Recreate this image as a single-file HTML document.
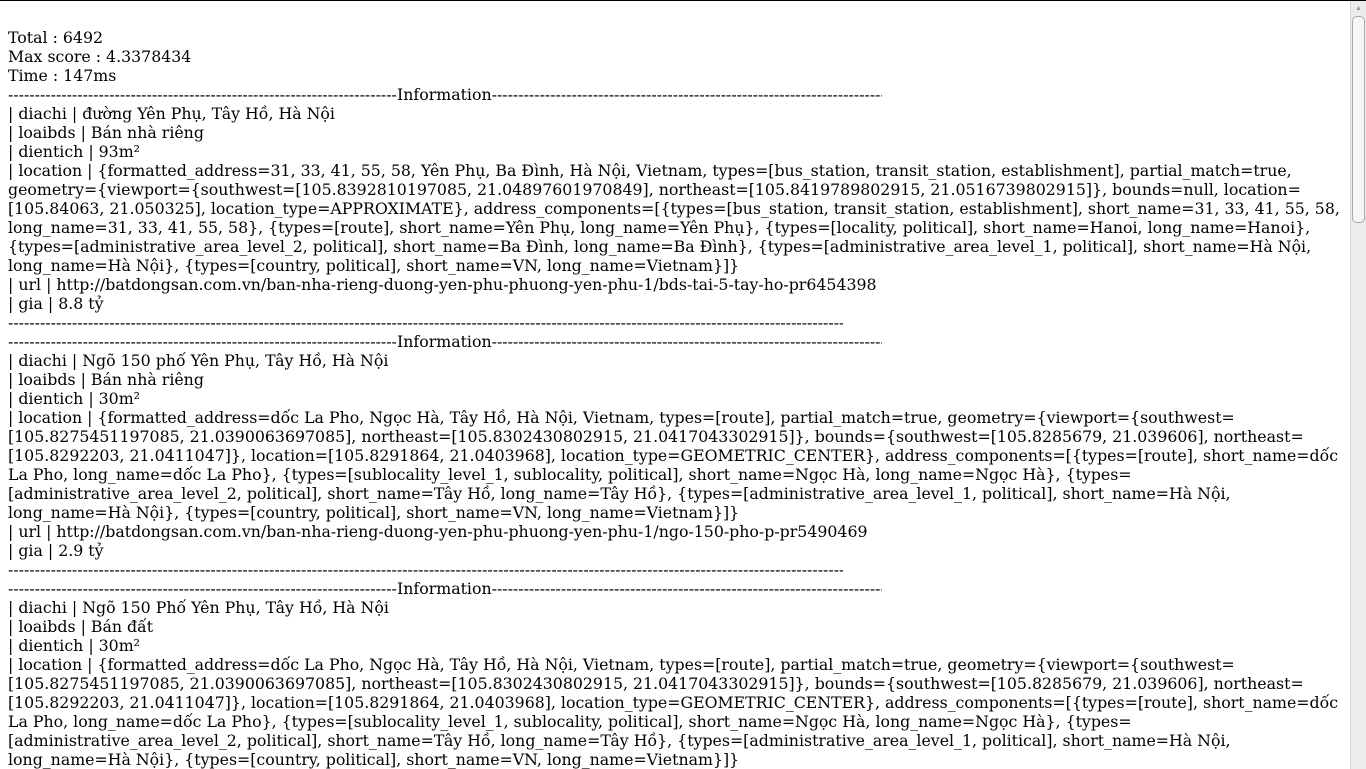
<!DOCTYPE html>
<html><head><meta charset="utf-8"><style>
html,body{margin:0;padding:0;background:#fff;}
body{width:1366px;height:768px;overflow:hidden;position:relative;border-top:1px solid #000;box-sizing:border-box;}
#c{position:absolute;left:8px;top:27px;font-family:"DejaVu Serif","Liberation Serif",serif;font-size:15.78px;line-height:19px;color:#000;white-space:nowrap;}
.d{display:inline-block;overflow:hidden;vertical-align:top;height:19px;}
#sb{position:absolute;left:1350px;top:0;width:16px;height:768px;background:#ececec;border-left:1px solid #d8d8d8;z-index:2;}
#th{position:absolute;left:1352px;top:15px;width:11px;height:205px;background:#f6f6f6;border:1px solid #a8a8a8;border-radius:5px;z-index:3;}
#up{position:absolute;left:1354px;top:3px;width:9px;height:9px;color:#999;font-size:7px;text-align:center;z-index:3;}
</style></head><body>
<div id="c">
Total : 6492<br>
Max score : 4.3378434<br>
Time : 147ms<br>
<span class="d" style="width:389px">----------------------------------------------------------------------------------------------------</span>Information<span class="d" style="width:390px">----------------------------------------------------------------------------------------------------</span><br>
| diachi | đường Yên Phụ, Tây Hồ, Hà Nội<br>
| loaibds | Bán nhà riêng<br>
| dientich | 93m²<br>
| location | {formatted_address=31, 33, 41, 55, 58, Yên Phụ, Ba Đình, Hà Nội, Vietnam, types=[bus_station, transit_station, establishment], partial_match=true,<br>
geometry={viewport={southwest=[105.8392810197085, 21.04897601970849], northeast=[105.8419789802915, 21.0516739802915]}, bounds=null, location=<br>
[105.84063, 21.050325], location_type=APPROXIMATE}, address_components=[{types=[bus_station, transit_station, establishment], short_name=31, 33, 41, 55, 58,<br>
long_name=31, 33, 41, 55, 58}, {types=[route], short_name=Yên Phụ, long_name=Yên Phụ}, {types=[locality, political], short_name=Hanoi, long_name=Hanoi},<br>
{types=[administrative_area_level_2, political], short_name=Ba Đình, long_name=Ba Đình}, {types=[administrative_area_level_1, political], short_name=Hà Nội,<br>
long_name=Hà Nội}, {types=[country, political], short_name=VN, long_name=Vietnam}]}<br>
| url | http://batdongsan.com.vn/ban-nha-rieng-duong-yen-phu-phuong-yen-phu-1/bds-tai-5-tay-ho-pr6454398<br>
| gia | 8.8 tỷ<br>
<span class="d" style="width:835px">------------------------------------------------------------------------------------------------------------------------------------------------------------------------------------------</span><br>
<span class="d" style="width:389px">----------------------------------------------------------------------------------------------------</span>Information<span class="d" style="width:390px">----------------------------------------------------------------------------------------------------</span><br>
| diachi | Ngõ 150 phố Yên Phụ, Tây Hồ, Hà Nội<br>
| loaibds | Bán nhà riêng<br>
| dientich | 30m²<br>
| location | {formatted_address=dốc La Pho, Ngọc Hà, Tây Hồ, Hà Nội, Vietnam, types=[route], partial_match=true, geometry={viewport={southwest=<br>
[105.8275451197085, 21.0390063697085], northeast=[105.8302430802915, 21.0417043302915]}, bounds={southwest=[105.8285679, 21.039606], northeast=<br>
[105.8292203, 21.0411047]}, location=[105.8291864, 21.0403968], location_type=GEOMETRIC_CENTER}, address_components=[{types=[route], short_name=dốc<br>
La Pho, long_name=dốc La Pho}, {types=[sublocality_level_1, sublocality, political], short_name=Ngọc Hà, long_name=Ngọc Hà}, {types=<br>
[administrative_area_level_2, political], short_name=Tây Hồ, long_name=Tây Hồ}, {types=[administrative_area_level_1, political], short_name=Hà Nội,<br>
long_name=Hà Nội}, {types=[country, political], short_name=VN, long_name=Vietnam}]}<br>
| url | http://batdongsan.com.vn/ban-nha-rieng-duong-yen-phu-phuong-yen-phu-1/ngo-150-pho-p-pr5490469<br>
| gia | 2.9 tỷ<br>
<span class="d" style="width:835px">------------------------------------------------------------------------------------------------------------------------------------------------------------------------------------------</span><br>
<span class="d" style="width:389px">----------------------------------------------------------------------------------------------------</span>Information<span class="d" style="width:390px">----------------------------------------------------------------------------------------------------</span><br>
| diachi | Ngõ 150 Phố Yên Phụ, Tây Hồ, Hà Nội<br>
| loaibds | Bán đất<br>
| dientich | 30m²<br>
| location | {formatted_address=dốc La Pho, Ngọc Hà, Tây Hồ, Hà Nội, Vietnam, types=[route], partial_match=true, geometry={viewport={southwest=<br>
[105.8275451197085, 21.0390063697085], northeast=[105.8302430802915, 21.0417043302915]}, bounds={southwest=[105.8285679, 21.039606], northeast=<br>
[105.8292203, 21.0411047]}, location=[105.8291864, 21.0403968], location_type=GEOMETRIC_CENTER}, address_components=[{types=[route], short_name=dốc<br>
La Pho, long_name=dốc La Pho}, {types=[sublocality_level_1, sublocality, political], short_name=Ngọc Hà, long_name=Ngọc Hà}, {types=<br>
[administrative_area_level_2, political], short_name=Tây Hồ, long_name=Tây Hồ}, {types=[administrative_area_level_1, political], short_name=Hà Nội,<br>
long_name=Hà Nội}, {types=[country, political], short_name=VN, long_name=Vietnam}]}<br>
</div>
<div id="sb"></div><div id="up">▲</div><div id="th"></div>
</body></html>
